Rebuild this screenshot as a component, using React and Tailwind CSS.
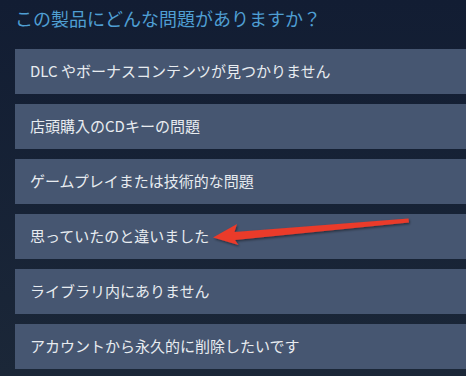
import React from "react";

const items = [
  "DLC やボーナスコンテンツが見つかりません",
  "店頭購入のCDキーの問題",
  "ゲームプレイまたは技術的な問題",
  "思っていたのと違いました",
  "ライブラリ内にありません",
  "アカウントから永久的に削除したいです",
];

function Arrow() {
  return (
    <svg
      className="absolute left-0 top-0 pointer-events-none"
      width="466"
      height="376"
      viewBox="0 0 466 376"
    >
      <defs>
        <filter id="sh" x="-10%" y="-50%" width="120%" height="200%">
          <feDropShadow dx="1" dy="1.5" stdDeviation="0.8" floodColor="#000" floodOpacity="0.45" />
        </filter>
      </defs>
      <g filter="url(#sh)">
        <path
          d="M213 237.5 L237 224 L234.5 232 L408.5 218.5 L409 222.5 L235 240 L238.5 245 Z"
          fill="#ea3a2a"
        />
      </g>
    </svg>
  );
}

export default function App() {
  return (
    <div
      className="relative w-[466px] h-[376px] overflow-hidden bg-gradient-to-b from-[#121d33] to-[#1b2738]"
      style={{ fontFamily: '"Noto Sans CJK JP", "Noto Sans", sans-serif' }}
    >
      <div className="pl-[15px] pt-[5px]">
        <h1 className="text-[18px] leading-[26px] text-[#4f9fd3] font-normal">
          この製品にどんな問題がありますか？
        </h1>
        <div className="mt-[18px] flex flex-col gap-[10px]">
          {items.map((t) => (
            <div
              key={t}
              className="h-[45px] w-[470px] bg-[#465671] flex items-center pl-[15px] text-[15px] text-[#e8ecf0]"
            >
              {t}
            </div>
          ))}
        </div>
      </div>
      <Arrow />
    </div>
  );
}
